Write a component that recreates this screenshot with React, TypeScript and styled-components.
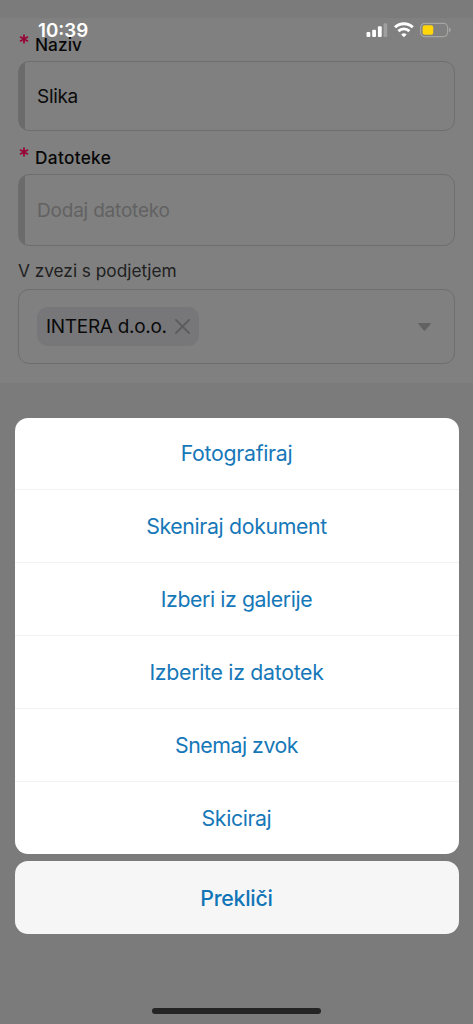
import React from 'react';
import styled, { createGlobalStyle } from 'styled-components';

const GlobalStyle = createGlobalStyle`
  * { box-sizing: border-box; }
  body { margin: 0; background: #7b7b7b; font-family: Inter, "Liberation Sans", sans-serif; }
  button { font: inherit; border: 0; padding: 0; background: none; }
`;

const Screen = styled.div`
  position: relative;
  height: 1024px;
  overflow: hidden;
  background: #7b7b7b;
`;

const StatusBar = styled.header`
  position: absolute;
  inset: 0 0 auto 0;
  height: 60px;
  display: flex;
  align-items: center;
  justify-content: space-between;
  padding: 0 22px 0 38px;
`;

const Clock = styled.span`
  padding-top: 2px;
  color: #fff;
  font-size: 18.8px;
  font-weight: 600;
  line-height: 24px;
  letter-spacing: 0;
`;

const StatusIcons = styled.svg`
  display: block;
`;

const Form = styled.main`
  margin-top: 18px;
  height: 365px;
  padding: 5px 18px 0;
  background: #808080;
  display: flex;
  flex-direction: column;
`;

const Label = styled.label<{ $height: number; $top: number; $strong?: boolean; $spacing: number }>`
  height: ${(p) => p.$height}px;
  padding-top: ${(p) => p.$top}px;
  display: flex;
  gap: 6px;
  color: ${(p) => (p.$strong ? '#080808' : '#202020')};
  font-size: 17.3px;
  line-height: 22px;
  font-weight: ${(p) => (p.$strong ? 500 : 400)};
  letter-spacing: ${(p) => p.$spacing}px;
`;

const Required = styled.svg`
  margin: 0 0 0 1px;
  flex: none;
`;

const Field = styled.div<{ $height: number; $required?: boolean }>`
  height: ${(p) => p.$height}px;
  width: 437px;
  flex: none;
  display: flex;
  align-items: center;
  justify-content: space-between;
  padding: ${(p) => (p.$required ? 2 : 0)}px 23px 0 18px;
  border: 1px solid #6e6e6e;
  border-radius: 11px;
  background: ${(p) => (p.$required ? 'linear-gradient(#6b6b6b, #6b6b6b) 0 0 / 7px 100% no-repeat border-box' : 'none')};
`;

const Value = styled.span<{ $muted?: boolean; $spacing: number }>`
  color: ${(p) => (p.$muted ? '#626262' : '#0a0a0a')};
  font-size: 19px;
  line-height: 24px;
  letter-spacing: ${(p) => p.$spacing}px;
`;

const Chip = styled.span`
  display: flex;
  align-items: center;
  justify-content: space-between;
  width: 162px;
  height: 39px;
  padding: 0 9px 0 9px;
  border-radius: 11px;
  background: #77777a;
`;

const Sheet = styled.section`
  position: absolute;
  top: 417.5px;
  left: 14.5px;
  right: 14.5px;
  display: flex;
  flex-direction: column;
  gap: 7px;
`;

const ActionGroup = styled.div`
  display: flex;
  flex-direction: column;
  height: 436.5px;
  border-radius: 13px;
  overflow: hidden;
  background: #fff;
`;

const Action = styled.button<{ $spacing: number }>`
  flex: 1;
  color: #1678b8;
  font-size: 21.3px;
  line-height: 28px;
  letter-spacing: ${(p) => p.$spacing}px;

  & + & { border-top: 1px solid #f2f2f2; }
`;

const CancelButton = styled.button`
  && {
    height: 73px;
    border-radius: 13px;
    background: #f6f6f6;
    color: #1175b7;
    font-size: 21.3px;
    font-weight: 550;
    letter-spacing: -0.25px;
  }
`;

const HomeIndicator = styled.div`
  position: absolute;
  left: 152px;
  bottom: 10px;
  width: 169px;
  height: 6px;
  border-radius: 3px;
  background: #242424;
`;

const Star = () => (
  <Required width="10" height="10" viewBox="0 0 10 10" fill="none" stroke="#960638" strokeWidth="1.8">
    <path d="M5 .6v8.8M1 2.8l8 4.4M9 2.8l-8 4.4" />
  </Required>
);

const actions: { label: string; spacing: number }[] = [
  { label: 'Fotografiraj', spacing: -0.3 },
  { label: 'Skeniraj dokument', spacing: -0.36 },
  { label: 'Izberi iz galerije', spacing: -0.42 },
  { label: 'Izberite iz datotek', spacing: -0.3 },
  { label: 'Snemaj zvok', spacing: -0.48 },
  { label: 'Skiciraj', spacing: -0.4 },
];

export default function App() {
  return (
    <Screen>
      <GlobalStyle />
      <Form>
        <Label $height={38} $top={11} $strong $spacing={0.05}><Star />Naziv</Label>
        <Field $height={70} $required><Value $spacing={-0.3}>Slika</Value></Field>
        <Label $height={43} $top={16} $strong $spacing={0.3}><Star />Datoteke</Label>
        <Field $height={72} $required><Value $muted $spacing={-0.2}>Dodaj datoteko</Value></Field>
        <Label $height={43} $top={14} $spacing={-0.03}>V zvezi s podjetjem</Label>
        <Field $height={75}>
          <Chip>
            <Value $spacing={-0.3}>INTERA d.o.o.</Value>
            <svg width="15" height="15" viewBox="0 0 15 15" fill="none" stroke="#5c5c5e" strokeWidth="1.8" strokeLinecap="round">
              <path d="M1 1l13 13M14 1L1 14" />
            </svg>
          </Chip>
          <svg width="13" height="8" viewBox="0 0 13 8" fill="#626262">
            <path d="M1 0h11q1.4 0 .5 1.2L7.4 7.2q-.9 1-1.8 0L.5 1.2Q-.4 0 1 0z" />
          </svg>
        </Field>
      </Form>

      <StatusBar>
        <Clock>10:39</Clock>
        <StatusIcons width="85" height="16" viewBox="0 0 85 16">
          <g fill="#fff">
            <rect x="0.5" y="10" width="3.8" height="5" rx="1" />
            <rect x="6.2" y="7.7" width="3.8" height="7.3" rx="1" />
            <rect x="11.9" y="4.2" width="3.8" height="10.8" rx="1" />
            <rect x="17.6" y="1.3" width="3.6" height="13.7" rx="1" fillOpacity=".25" />
          </g>
          <g fill="none" stroke="#fff" strokeWidth="2.9">
            <path d="M29 5.3a13 13 0 0 1 17.8 0" />
            <path d="M32.4 9.1a8 8 0 0 1 11 0" />
          </g>
          <path d="M37.9 15.2l-2.7-2.8q2.7-2.2 5.4 0z" fill="#fff" />
          <rect x="54.6" y="1.4" width="27" height="13.2" rx="4" fill="none" stroke="#a5a4a0" strokeWidth="1.2" />
          <rect x="56.6" y="3.3" width="10.6" height="9.4" rx="2" fill="#ffd60a" />
          <path d="M83 5.8q1.8.6 1.8 2.2T83 10.2z" fill="#a5a4a0" />
        </StatusIcons>
      </StatusBar>

      <Sheet>
        <ActionGroup>
          {actions.map((a) => (
            <Action key={a.label} $spacing={a.spacing}>{a.label}</Action>
          ))}
        </ActionGroup>
        <CancelButton>Prekliči</CancelButton>
      </Sheet>
      <HomeIndicator />
    </Screen>
  );
}
